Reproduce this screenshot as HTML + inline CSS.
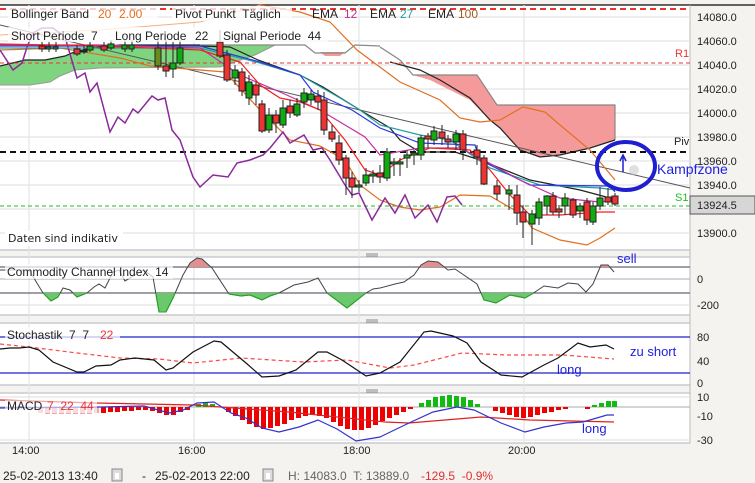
<!DOCTYPE html>
<html><head><meta charset="utf-8"><style>
body{margin:0;width:755px;height:483px;overflow:hidden;background:#f4f3ef;font-family:"Liberation Sans",sans-serif}
svg{display:block}
text{font-family:"Liberation Sans",sans-serif;white-space:pre}
</style></head><body>
<svg width="755" height="483" viewBox="0 0 755 483" xmlns="http://www.w3.org/2000/svg" xml:space="preserve">
<defs>
<clipPath id="cu"><rect x="0" y="250" width="690" height="17"/></clipPath>
<clipPath id="cd"><rect x="0" y="293" width="690" height="25"/></clipPath>
</defs>
<rect x="0" y="5" width="690" height="245" fill="#fff"/>
<rect x="0" y="257" width="690" height="58" fill="#fff"/>
<rect x="0" y="323" width="690" height="62" fill="#fff"/>
<rect x="0" y="393" width="690" height="50" fill="#fff"/>
<line x1="0" y1="5" x2="755" y2="5" stroke="#333" stroke-width="1.5"/>
<g stroke="#c8cbd2" stroke-width="1.5">
<line x1="0" y1="250" x2="690" y2="250"/><line x1="0" y1="315" x2="690" y2="315"/><line x1="0" y1="385" x2="690" y2="385"/><line x1="0" y1="443" x2="690" y2="443"/>
<line x1="0" y1="257" x2="690" y2="257"/><line x1="0" y1="323" x2="690" y2="323"/><line x1="0" y1="393" x2="690" y2="393"/>
</g>
<line x1="690" y1="5" x2="690" y2="443" stroke="#bbb"/>
<g stroke="#888"><line x1="366" y1="254" x2="378" y2="254"/><line x1="366" y1="256" x2="378" y2="256"/><line x1="366" y1="320" x2="378" y2="320"/><line x1="366" y1="322" x2="378" y2="322"/><line x1="366" y1="390" x2="378" y2="390"/><line x1="366" y1="392" x2="378" y2="392"/></g>
<g stroke="#e4e4e4" stroke-width="1.2">
<line x1="0" y1="17" x2="690" y2="17"/><line x1="0" y1="41" x2="690" y2="41"/><line x1="0" y1="65" x2="690" y2="65"/><line x1="0" y1="89" x2="690" y2="89"/><line x1="0" y1="113" x2="690" y2="113"/><line x1="0" y1="137" x2="690" y2="137"/><line x1="0" y1="161" x2="690" y2="161"/><line x1="0" y1="185" x2="690" y2="185"/><line x1="0" y1="209" x2="690" y2="209"/><line x1="0" y1="233" x2="690" y2="233"/>
<line x1="29" y1="5" x2="29" y2="443"/><line x1="194" y1="5" x2="194" y2="443"/><line x1="359" y1="5" x2="359" y2="443"/><line x1="524" y1="5" x2="524" y2="443"/>
<line x1="0" y1="305" x2="690" y2="305"/><line x1="0" y1="440" x2="690" y2="440"/><line x1="0" y1="397" x2="690" y2="397"/>
</g>
<!-- clouds -->
<path d="M0,66 L25,60 45,60 65,56 72,53 90,48 120,45 275,45 L255,55 L235,62 L220,67 L100,68 L75,70 L60,76 L50,82 L30,85 L0,85 Z" fill="#7fd47f"/>
<polyline fill="none" stroke="#999" stroke-width="1" points="0,85 30,85 50,82 60,76 75,70 100,68 220,67 235,62 255,55 275,45"/>
<polyline fill="none" stroke="#222" stroke-width="1.2" points="0,66 25,60 45,60 65,56 72,53 90,48 120,45 200,45"/>
<path d="M320,52 L345,52 L340,56 L325,56 Z" fill="#f59a9a"/>
<polyline fill="none" stroke="#888" stroke-width="1.2" points="200,45 275,45 305,45 315,53 345,53 355,45 380,46"/>
<path d="M413,75 L477,75 L497,105 L615,105 L615,140 L580,150 L560,155 L540,157 L520,150 L500,128 L490,120 L470,100 L450,90 L430,80 Z" fill="#f59a9a"/>
<polyline fill="none" stroke="#888" stroke-width="1.2" points="380,47 400,60 413,75 477,75 497,105 615,105 615,140"/>
<polyline fill="none" stroke="#222" stroke-width="1.2" points="390,62 420,70 440,80 470,98 490,120 500,128 520,150 540,157 560,155 590,148 615,140"/>
<line x1="0" y1="9" x2="690" y2="9" stroke="#e33" stroke-width="2" stroke-dasharray="6,4"/>
<line x1="0" y1="63" x2="690" y2="63" stroke="#e33" stroke-dasharray="4,3"/>
<line x1="0" y1="152" x2="690" y2="152" stroke="#111" stroke-width="2" stroke-dasharray="6,4"/>
<line x1="0" y1="206" x2="690" y2="206" stroke="#2b2" stroke-dasharray="4,3"/>
<line x1="0" y1="25" x2="690" y2="188" stroke="#555" stroke-width="1"/>
<polyline fill="none" stroke="#f0b080" stroke-width="1" points="0,35 100,30 200,22 260,5"/>
<polyline fill="none" stroke="#e07020" stroke-width="1.2" points="260,5 300,12 330,22 357,50 400,82 440,100 460,118 480,122 500,120 523,107 545,112 560,125 590,150 615,180"/>
<polyline fill="none" stroke="#e07020" stroke-width="1.2" points="0,50 60,48 120,58 150,66 225,72 260,110 290,140 320,146 345,160 360,185 380,200 400,207 420,210 440,207 460,195 490,196 523,215 532,228 560,240 587,245 600,238 615,228"/>
<polyline fill="none" stroke="#8a2a9a" stroke-width="1.5" points="0,50 13,70 22,63 27,47 33,33 42,28 53,28 65,37 77,78 85,73 90,92 97,83 110,132 118,117 125,123 133,109 138,113 152,96 158,100 165,98 172,130 180,140 193,177 200,187 213,175 228,177 237,163 250,160 263,155 270,148 283,132 290,143 304,135 313,150 322,148 330,160 345,185 352,195 359,193 372,220 385,198 395,213 405,195 415,218 428,205 437,222 447,197 455,196 462,205"/>
<polyline fill="none" stroke="#222" stroke-width="1.2" points="200,46 230,47 258,60 300,75 323,87 360,110 390,128 400,140 420,152 455,152 480,160 530,180 580,190 610,198"/>
<polyline fill="none" stroke="#20a0a0" stroke-width="1.2" points="0,48 100,48 200,48 260,63 300,75 340,98 360,110 380,125 420,135 450,140 490,168 540,185 600,188 615,190"/>
<polyline fill="none" stroke="#2a3ae0" stroke-width="1.2" points="0,46 100,46 200,46 260,62 300,75 313,92 330,100 352,110 380,128 420,143 475,145 480,160 530,185 610,186 615,192"/>
<polyline fill="none" stroke="#c030a0" stroke-width="1.2" points="0,45 100,45 200,48 240,75 280,92 320,110 345,125 365,137 380,155 420,148 460,148 480,158 520,180 560,198 600,202 615,200"/>
<polyline fill="none" stroke="#f02020" stroke-width="1.2" points="0,44 100,46 200,50 240,62 260,85 280,98 300,102 320,110 345,140 365,170 380,175 400,160 430,148 470,150 490,170 510,195 530,215 560,215 600,212 615,212"/>
<g stroke="#222" stroke-width="1">
<line x1="42" y1="42" x2="42" y2="52"/><rect x="39" y="46" width="6" height="3" fill="#e33"/>
<line x1="49" y1="42" x2="49" y2="52"/><rect x="46" y="47" width="5" height="2" fill="#1a1"/>
<line x1="56" y1="42" x2="56" y2="52"/><rect x="53" y="47" width="5" height="2" fill="#1a1"/>
<line x1="77" y1="45" x2="77" y2="56"/><rect x="74" y="49" width="6" height="5" fill="#e33"/>
<line x1="84" y1="45" x2="84" y2="54"/><rect x="81" y="50" width="6" height="2" fill="#222"/>
<line x1="90" y1="42" x2="90" y2="52"/><rect x="87" y="46" width="6" height="4" fill="#1a1"/>
<line x1="104" y1="42" x2="104" y2="52"/><rect x="101" y="46" width="6" height="4" fill="#e33"/>
<line x1="111" y1="40" x2="111" y2="50"/><rect x="108" y="44" width="6" height="4" fill="#1a1"/>
<line x1="125" y1="40" x2="125" y2="52"/><rect x="122" y="45" width="5" height="4" fill="#1a1"/>
<line x1="132" y1="40" x2="132" y2="52"/><rect x="129" y="45" width="5" height="4" fill="#1a1"/>
<line x1="158" y1="35" x2="158" y2="70"/><rect x="155" y="48" width="6" height="18" fill="#6a8a20"/>
<line x1="166" y1="40" x2="166" y2="77"/><rect x="163" y="66" width="6" height="5" fill="#e33"/>
<line x1="173" y1="42" x2="173" y2="78"/><rect x="170" y="63" width="6" height="6" fill="#1a1"/>
<line x1="180" y1="40" x2="180" y2="65"/><rect x="177" y="48" width="6" height="15" fill="#1a1"/>
<line x1="220" y1="30" x2="220" y2="58"/><rect x="217" y="42" width="6" height="14" fill="#e33"/>
<line x1="227" y1="50" x2="227" y2="82"/><rect x="224" y="55" width="6" height="25" fill="#e33"/>
<line x1="235" y1="65" x2="235" y2="85"/><rect x="232" y="70" width="6" height="8" fill="#1a1"/>
<line x1="242" y1="68" x2="242" y2="96"/><rect x="239" y="72" width="6" height="19" fill="#e33"/>
<line x1="249" y1="75" x2="249" y2="105"/><rect x="246" y="82" width="6" height="16" fill="#1a1"/>
<line x1="256" y1="82" x2="256" y2="105"/><rect x="253" y="85" width="6" height="10" fill="#e33"/>
<line x1="262" y1="100" x2="262" y2="133"/><rect x="259" y="104" width="6" height="27" fill="#e33"/>
<line x1="269" y1="108" x2="269" y2="133"/><rect x="266" y="115" width="6" height="15" fill="#1a1"/>
<line x1="276" y1="110" x2="276" y2="133"/><rect x="273" y="115" width="6" height="8" fill="#e33"/>
<line x1="283" y1="100" x2="283" y2="128"/><rect x="280" y="108" width="6" height="17" fill="#1a1"/>
<line x1="290" y1="100" x2="290" y2="118"/><rect x="287" y="106" width="6" height="7" fill="#e33"/>
<line x1="297" y1="98" x2="297" y2="117"/><rect x="294" y="104" width="6" height="11" fill="#1a1"/>
<line x1="304" y1="88" x2="304" y2="108"/><rect x="301" y="93" width="6" height="9" fill="#1a1"/>
<line x1="311" y1="90" x2="311" y2="105"/><rect x="308" y="94" width="6" height="6" fill="#1a1"/>
<line x1="318" y1="90" x2="318" y2="110"/><rect x="315" y="96" width="6" height="6" fill="#e33"/>
<line x1="324" y1="92" x2="324" y2="135"/><rect x="321" y="100" width="6" height="30" fill="#e33"/>
<line x1="332" y1="125" x2="332" y2="142"/><rect x="329" y="132" width="6" height="7" fill="#e33"/>
<line x1="339" y1="135" x2="339" y2="165"/><rect x="336" y="143" width="6" height="17" fill="#e33"/>
<line x1="346" y1="155" x2="346" y2="195"/><rect x="343" y="158" width="6" height="20" fill="#e33"/>
<line x1="352" y1="172" x2="352" y2="198"/><rect x="349" y="178" width="6" height="9" fill="#e33"/>
<line x1="359" y1="180" x2="359" y2="192"/><rect x="356" y="185" width="6" height="2" fill="#1a1"/>
<line x1="366" y1="168" x2="366" y2="186"/><rect x="363" y="175" width="6" height="8" fill="#1a1"/>
<line x1="373" y1="170" x2="373" y2="183"/><rect x="370" y="174" width="6" height="2" fill="#1a1"/>
<line x1="380" y1="165" x2="380" y2="183"/><rect x="377" y="173" width="6" height="4" fill="#e33"/>
<line x1="387" y1="148" x2="387" y2="181"/><rect x="384" y="152" width="6" height="26" fill="#1a1"/>
<line x1="394" y1="158" x2="394" y2="176"/><rect x="391" y="162" width="6" height="2" fill="#1a1"/>
<line x1="400" y1="158" x2="400" y2="176"/><rect x="397" y="162" width="6" height="2" fill="#1a1"/>
<line x1="407" y1="150" x2="407" y2="168"/><rect x="404" y="155" width="6" height="3" fill="#1a1"/>
<line x1="414" y1="150" x2="414" y2="165"/><rect x="411" y="153" width="6" height="2" fill="#1a1"/>
<line x1="421" y1="135" x2="421" y2="160"/><rect x="418" y="138" width="6" height="17" fill="#1a1"/>
<line x1="428" y1="133" x2="428" y2="148"/><rect x="425" y="136" width="6" height="3" fill="#e33"/>
<line x1="434" y1="126" x2="434" y2="145"/><rect x="431" y="131" width="6" height="9" fill="#1a1"/>
<line x1="442" y1="125" x2="442" y2="145"/><rect x="439" y="132" width="6" height="6" fill="#e33"/>
<line x1="448" y1="135" x2="448" y2="148"/><rect x="445" y="139" width="6" height="3" fill="#e33"/>
<line x1="456" y1="130" x2="456" y2="150"/><rect x="453" y="134" width="6" height="8" fill="#1a1"/>
<line x1="463" y1="130" x2="463" y2="160"/><rect x="460" y="134" width="6" height="16" fill="#e33"/>
<line x1="477" y1="145" x2="477" y2="165"/><rect x="474" y="150" width="6" height="7" fill="#e33"/>
<line x1="484" y1="155" x2="484" y2="185"/><rect x="481" y="158" width="6" height="26" fill="#e33"/>
<line x1="497" y1="180" x2="497" y2="200"/><rect x="494" y="186" width="6" height="8" fill="#e33"/>
<line x1="509" y1="185" x2="509" y2="210"/><rect x="506" y="190" width="6" height="4" fill="#1a1"/>
<line x1="517" y1="185" x2="517" y2="225"/><rect x="514" y="195" width="6" height="18" fill="#e33"/>
<line x1="523" y1="205" x2="523" y2="238"/><rect x="520" y="212" width="6" height="10" fill="#e33"/>
<line x1="532" y1="210" x2="532" y2="245"/><rect x="529" y="214" width="6" height="10" fill="#1a1"/>
<line x1="539" y1="198" x2="539" y2="225"/><rect x="536" y="202" width="6" height="16" fill="#1a1"/>
<line x1="547" y1="195" x2="547" y2="215"/><rect x="544" y="196" width="6" height="10" fill="#1a1"/>
<line x1="553" y1="192" x2="553" y2="215"/><rect x="550" y="196" width="6" height="16" fill="#e33"/>
<line x1="559" y1="205" x2="559" y2="218"/><rect x="556" y="209" width="6" height="3" fill="#e33"/>
<line x1="565" y1="193" x2="565" y2="215"/><rect x="562" y="198" width="6" height="8" fill="#1a1"/>
<line x1="573" y1="198" x2="573" y2="218"/><rect x="570" y="200" width="6" height="15" fill="#e33"/>
<line x1="580" y1="203" x2="580" y2="218"/><rect x="577" y="206" width="6" height="5" fill="#1a1"/>
<line x1="587" y1="198" x2="587" y2="225"/><rect x="584" y="202" width="6" height="18" fill="#e33"/>
<line x1="593" y1="202" x2="593" y2="225"/><rect x="590" y="206" width="6" height="16" fill="#1a1"/>
<line x1="600" y1="187" x2="600" y2="210"/><rect x="597" y="198" width="6" height="8" fill="#1a1"/>
<line x1="608" y1="188" x2="608" y2="205"/><rect x="605" y="197" width="6" height="5" fill="#e33"/>
<line x1="615" y1="193" x2="615" y2="206"/><rect x="612" y="196" width="6" height="8" fill="#e33"/>
</g>
<g font-size="12">
<rect x="8" y="6" width="150" height="15" fill="#fff" opacity="0.75"/>
<rect x="172" y="6" width="120" height="15" fill="#fff" opacity="0.75"/>
<rect x="8" y="27" width="320" height="15" fill="#fff" opacity="0.75"/>
<text x="11" y="18" fill="#222">Bollinger Band</text><text x="98" y="18" fill="#e07020">20</text><text x="119" y="18" fill="#e07020">2.00</text>
<text x="175" y="18" fill="#222">Pivot Punkt  Täglich</text>
<text x="312" y="18" fill="#222">EMA</text><text x="344" y="18" fill="#c0308a">12</text>
<text x="370" y="18" fill="#222">EMA</text><text x="400" y="18" fill="#20a0a0">27</text>
<text x="428" y="18" fill="#222">EMA</text><text x="458" y="18" fill="#a06020">100</text>
<text x="11" y="40" fill="#222">Short Periode  7</text><text x="115" y="40" fill="#222">Long Periode</text><text x="195" y="40" fill="#222">22</text><text x="223" y="40" fill="#222">Signal Periode  44</text>
</g>
<text x="675" y="57" font-size="11" fill="#e33">R1</text>
<text x="674" y="145" font-size="11" fill="#222">Piv</text>
<text x="675" y="201" font-size="11" fill="#2b2">S1</text>
<rect x="5" y="231" width="118" height="15" fill="#fff"/>
<text x="8" y="242" font-size="11" fill="#222" style="font-family:'DejaVu Sans',sans-serif">Daten sind indikativ</text>
<ellipse cx="626" cy="166" rx="29" ry="24" fill="none" stroke="#1f1fd0" stroke-width="4"/>
<line x1="623" y1="172" x2="623" y2="157" stroke="#1f1fd0" stroke-width="1.5"/><path d="M620,161 L623,155 626,161" fill="none" stroke="#1f1fd0" stroke-width="1.5"/>
<circle cx="634" cy="170" r="5" fill="#ccc" opacity="0.6"/>
<text x="657" y="174" font-size="14" fill="#2020e0">Kampfzone</text>
<g font-size="11" fill="#222">
<text x="697" y="21">14080.0</text><text x="697" y="45">14060.0</text><text x="697" y="69">14040.0</text><text x="697" y="93">14020.0</text><text x="697" y="117">14000.0</text><text x="697" y="141">13980.0</text><text x="697" y="165">13960.0</text><text x="697" y="189">13940.0</text><text x="697" y="237">13900.0</text>
</g>
<rect x="690" y="196" width="65" height="18" fill="#d6d6d6" stroke="#555"/>
<text x="697" y="209" font-size="11" fill="#222">13924.5</text>
<!-- CCI -->
<line x1="0" y1="267" x2="690" y2="267" stroke="#667" stroke-width="1.2"/>
<line x1="0" y1="279" x2="690" y2="279" stroke="#aab"/>
<line x1="0" y1="293" x2="690" y2="293" stroke="#667" stroke-width="1.2"/>
<polygon clip-path="url(#cu)" fill="#e09090" points="0,270 29,270 43,293 51,301 58,297 63,288 70,290 77,297 87,293 94,287 99,284 105,288 113,272 119,270 125,281 135,275 144,270 153,277 159,312 166,312 173,298 183,275 190,263 197,258 202,259 212,268 229,294 241,296 250,295 262,300 270,296 279,293 294,285 308,282 318,278 327,293 347,308 366,293 373,289 380,288 395,284 404,282 414,275 421,265 428,261 438,262 448,270 455,269 477,284 484,300 496,303 510,295 525,298 532,294 544,286 558,288 568,283 578,284 586,292 593,284 601,265 608,265 614,272 614,267 0,267"/>
<polygon clip-path="url(#cd)" fill="#6cc86c" points="0,270 29,270 43,293 51,301 58,297 63,288 70,290 77,297 87,293 94,287 99,284 105,288 113,272 119,270 125,281 135,275 144,270 153,277 159,312 166,312 173,298 183,275 190,263 197,258 202,259 212,268 229,294 241,296 250,295 262,300 270,296 279,293 294,285 308,282 318,278 327,293 347,308 366,293 373,289 380,288 395,284 404,282 414,275 421,265 428,261 438,262 448,270 455,269 477,284 484,300 496,303 510,295 525,298 532,294 544,286 558,288 568,283 578,284 586,292 593,284 601,265 608,265 614,272 614,293 0,293"/>
<polyline fill="none" stroke="#444" stroke-width="1" points="0,270 29,270 43,293 51,301 58,297 63,288 70,290 77,297 87,293 94,287 99,284 105,288 113,272 119,270 125,281 135,275 144,270 153,277 159,312 166,312 173,298 183,275 190,263 197,258 202,259 212,268 229,294 241,296 250,295 262,300 270,296 279,293 294,285 308,282 318,278 327,293 347,308 366,293 373,289 380,288 395,284 404,282 414,275 421,265 428,261 438,262 448,270 455,269 477,284 484,300 496,303 510,295 525,298 532,294 544,286 558,288 568,283 578,284 586,292 593,284 601,265 608,265 614,272"/>
<polyline fill="none" stroke="#2a2" stroke-width="1" clip-path="url(#cd)" points="0,270 29,270 43,293 51,301 58,297 63,288 70,290 77,297 87,293 94,287 99,284 105,288 113,272 119,270 125,281 135,275 144,270 153,277 159,312 166,312 173,298 183,275 190,263 197,258 202,259 212,268 229,294 241,296 250,295 262,300 270,296 279,293 294,285 308,282 318,278 327,293 347,308 366,293 373,289 380,288 395,284 404,282 414,275 421,265 428,261 438,262 448,270 455,269 477,284 484,300 496,303 510,295 525,298 532,294 544,286 558,288 568,283 578,284 586,292 593,284 601,265 608,265 614,272"/>
<rect x="5" y="264" width="168" height="15" fill="#fff" opacity="0.7"/>
<text x="7" y="276" font-size="12" fill="#222">Commodity Channel Index  14</text>
<text x="617" y="263" font-size="13" fill="#2020e0">sell</text>
<g font-size="11" fill="#222"><text x="697" y="283">0</text><text x="697" y="309">-200</text></g>
<!-- Stoch -->
<line x1="0" y1="337" x2="690" y2="337" stroke="#22c" stroke-width="1.2"/>
<line x1="0" y1="373" x2="690" y2="373" stroke="#22c" stroke-width="1.2"/>
<polyline fill="none" stroke="#f44" stroke-width="1.2" stroke-dasharray="4,3" points="0,344 29,347 77,353 120,358 159,359 193,363 241,358 303,362 347,360 390,368 414,365 462,353 506,355 563,355 614,359"/>
<polyline fill="none" stroke="#111" stroke-width="1.2" points="0,349 10,348 19,348 29,347 39,350 53,362 77,372 84,372 96,366 111,365 120,360 135,358 154,360 166,370 173,368 193,352 214,341 221,342 246,363 262,377 279,376 296,370 318,352 327,352 342,360 366,376 380,373 400,362 424,332 431,331 453,336 467,343 481,362 501,375 522,377 544,365 558,358 578,343 590,347 606,345 614,349"/>
<rect x="5" y="327" width="115" height="15" fill="#fff" opacity="0.7"/>
<text x="7" y="339" font-size="12" fill="#222">Stochastik  7  7</text><text x="100" y="339" font-size="12" fill="#e33">22</text>
<text x="630" y="356" font-size="13" fill="#2020e0">zu short</text>
<text x="557" y="374" font-size="13" fill="#2020e0">long</text>
<g font-size="11" fill="#222"><text x="697" y="341">80</text><text x="697" y="365">40</text><text x="697" y="387">0</text></g>
<!-- MACD -->
<line x1="0" y1="407" x2="690" y2="407" stroke="#aaa"/>
<g fill="#f0a8a8"><rect x="38" y="407" width="5" height="6"/><rect x="45" y="407" width="5" height="7"/><rect x="52" y="407" width="5" height="7"/><rect x="59" y="407" width="5" height="7"/><rect x="66" y="407" width="5" height="7"/><rect x="73" y="407" width="5" height="7"/><rect x="80" y="407" width="5" height="7"/><rect x="87" y="407" width="5" height="7"/><rect x="94" y="407" width="5" height="6"/></g>
<g fill="#e00">
<rect x="101" y="407" width="5" height="6"/><rect x="108" y="407" width="5" height="5"/><rect x="115" y="407" width="5" height="5"/><rect x="122" y="407" width="5" height="4"/><rect x="129" y="407" width="5" height="4"/><rect x="136" y="407" width="5" height="3"/><rect x="143" y="407" width="5" height="3"/><rect x="150" y="407" width="5" height="4"/><rect x="157" y="407" width="5" height="6"/><rect x="164" y="407" width="5" height="8"/><rect x="171" y="407" width="5" height="8"/><rect x="178" y="407" width="5" height="5"/><rect x="185" y="407" width="5" height="3"/>
<rect x="226" y="407" width="5" height="5"/><rect x="233" y="407" width="5" height="9"/><rect x="240" y="407" width="5" height="13"/><rect x="247" y="407" width="5" height="17"/><rect x="254" y="407" width="5" height="20"/><rect x="261" y="407" width="5" height="22"/><rect x="268" y="407" width="5" height="21"/><rect x="275" y="407" width="5" height="19"/><rect x="282" y="407" width="5" height="17"/><rect x="289" y="407" width="5" height="13"/><rect x="296" y="407" width="5" height="11"/><rect x="303" y="407" width="5" height="9"/><rect x="310" y="407" width="5" height="8"/><rect x="317" y="407" width="5" height="9"/><rect x="324" y="407" width="5" height="11"/><rect x="331" y="407" width="5" height="15"/><rect x="338" y="407" width="5" height="19"/><rect x="345" y="407" width="5" height="22"/><rect x="352" y="407" width="5" height="23"/><rect x="359" y="407" width="5" height="23"/><rect x="366" y="407" width="5" height="21"/><rect x="373" y="407" width="5" height="18"/><rect x="380" y="407" width="5" height="14"/><rect x="387" y="407" width="5" height="11"/><rect x="394" y="407" width="5" height="8"/><rect x="401" y="407" width="5" height="5"/><rect x="408" y="407" width="5" height="2"/>
<rect x="493" y="407" width="5" height="4"/><rect x="500" y="407" width="5" height="6"/><rect x="507" y="407" width="5" height="8"/><rect x="514" y="407" width="5" height="10"/><rect x="521" y="407" width="5" height="11"/><rect x="528" y="407" width="5" height="10"/><rect x="535" y="407" width="5" height="8"/><rect x="542" y="407" width="5" height="6"/><rect x="549" y="407" width="5" height="5"/><rect x="556" y="407" width="5" height="3"/><rect x="563" y="407" width="5" height="2"/><rect x="585" y="407" width="5" height="2"/>
</g>
<g fill="#1b1"><rect x="196" y="404" width="5" height="3"/><rect x="203" y="403" width="5" height="4"/><rect x="210" y="404" width="5" height="3"/><rect x="419" y="403" width="5" height="4"/><rect x="426" y="400" width="5" height="7"/><rect x="433" y="397" width="5" height="10"/><rect x="440" y="396" width="5" height="11"/><rect x="447" y="395" width="5" height="12"/><rect x="454" y="396" width="5" height="11"/><rect x="461" y="397" width="5" height="10"/><rect x="468" y="400" width="5" height="7"/><rect x="475" y="404" width="5" height="3"/><rect x="592" y="405" width="5" height="2"/><rect x="599" y="403" width="5" height="4"/><rect x="606" y="401" width="5" height="6"/><rect x="612" y="401" width="5" height="6"/></g>
<polyline fill="none" stroke="#d22" stroke-width="1.2" points="0,400 96,403 193,405 289,412 385,422 409,423 481,417 530,420 614,422"/>
<polyline fill="none" stroke="#33c" stroke-width="1.2" points="0,408 101,407 144,406 169,413 183,410 197,403 214,402 231,413 246,418 262,428 279,432 299,427 318,420 337,429 356,441 380,437 409,423 433,412 457,407 474,410 501,423 525,432 544,427 566,423 583,422 607,415 614,415"/>
<rect x="5" y="400" width="92" height="13" fill="#fff" opacity="0.6"/>
<text x="7" y="410" font-size="12" fill="#222">MACD</text><text x="47" y="410" font-size="12" fill="#e33">7  22  44</text>
<text x="582" y="433" font-size="13" fill="#2020e0">long</text>
<g font-size="11" fill="#222"><text x="697" y="401">10</text><text x="697" y="420">-10</text><text x="697" y="444">-30</text></g>
<g font-size="11" fill="#222"><text x="12" y="454">14:00</text><text x="178" y="454">16:00</text><text x="343" y="454">18:00</text><text x="508" y="454">20:00</text></g>
<g font-size="12">
<text x="3" y="480" fill="#222">25-02-2013 13:40</text>
<rect x="112" y="469" width="10" height="12" fill="#ddd" stroke="#888"/><rect x="115" y="473" width="4" height="6" fill="#fff"/>
<text x="142" y="480" fill="#222">-</text>
<text x="155" y="480" fill="#222">25-02-2013 22:00</text>
<rect x="263" y="469" width="10" height="12" fill="#ddd" stroke="#888"/><rect x="266" y="473" width="4" height="6" fill="#fff"/>
<text x="288" y="480" fill="#666">H: 14083.0  T: 13889.0</text>
<text x="421" y="480" fill="#e03030">-129.5  -0.9%</text>
</g>
</svg>
</body></html>
